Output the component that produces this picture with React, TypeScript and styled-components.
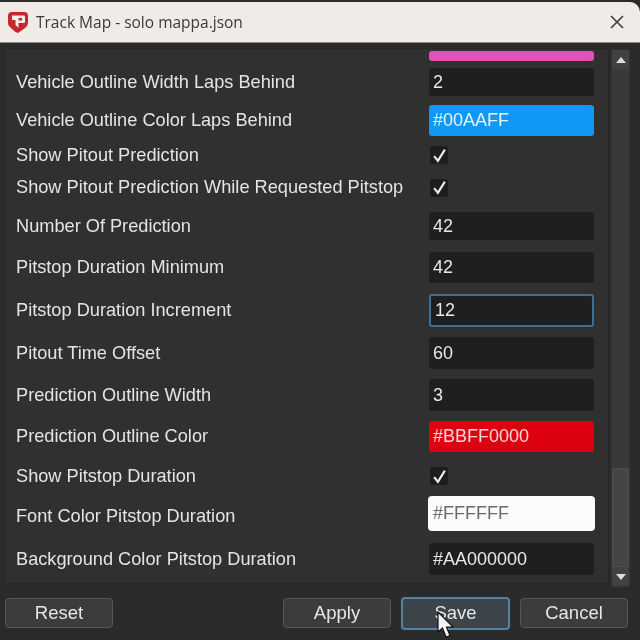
import { createGlobalStyle, styled } from 'styled-components';

const GlobalStyle = createGlobalStyle`
    html, body {
        margin: 0;
        padding: 0;
        background: #2c2c2c;
    }
    * {
        box-sizing: border-box;
    }
`;

const Window = styled.div`
    position: relative;
    width: 640px;
    height: 640px;
    overflow: hidden;
    display: flex;
    flex-direction: column;
    background: #2b2b2b;
    font-family: 'Liberation Sans', Arial, sans-serif;
    color: #e6e6e6;
    filter: blur(0.35px);
`;

const TitleBar = styled.div`
    height: 41px;
    margin-top: 2px;
    flex: none;
    display: flex;
    align-items: center;
    padding: 0 16px 0 7px;
    gap: 7px;
    background: #f1ebe7;
    border-top-right-radius: 10px;
    border-bottom: 1px solid #8d8a88;
`;

const Title = styled.div`
    flex: 1;
    font-family: 'Open Sans', 'Noto Sans', sans-serif;
    font-size: 15.5px;
    color: #3a3a3a;
`;

const Body = styled.div`
    flex: 1;
    min-height: 0;
    display: flex;
    padding: 5px 10px 0 4px;
    gap: 2px;
`;

const Panel = styled.div`
    flex: 1;
    min-width: 0;
    height: 536px;
    overflow: hidden;
    background: #303030;
    border: 1px solid #262626;
    border-radius: 3px;
    padding-left: 11px;
    display: flex;
    flex-direction: column;
`;

const Row = styled.div<{ $h: number }>`
    height: ${(p) => p.$h}px;
    flex: none;
    display: grid;
    grid-template-columns: 413px 165px;
    align-items: center;
`;

const Label = styled.div<{ $drop?: boolean }>`
    font-size: 18.2px;
    white-space: nowrap;
    color: #e4e4e4;
    margin-top: ${(p) => (p.$drop ? 5 : 0)}px;
`;

const Field = styled.div<{ $bg?: string; $fg?: string; $h?: number; $focus?: boolean; $bloom?: boolean }>`
    height: ${(p) => p.$h ?? 32}px;
    display: flex;
    align-items: center;
    padding-left: 4px;
    font-size: 18px;
    border-radius: 3px;
    background: ${(p) => p.$bg ?? '#1f1f1f'};
    color: ${(p) => p.$fg ?? '#e8e8e8'};
    border: ${(p) => (p.$focus ? '2px solid #3f6e8e' : 'none')};
    box-shadow: ${(p) => (p.$bloom ? '0 0 0 1px #fbfbfb' : 'none')};
`;

const Check = styled.div`
    width: 18px;
    height: 18px;
    margin-left: 1px;
    border-radius: 3px;
    background: #1d1d1d;
    display: flex;
    align-items: center;
    justify-content: center;
`;

const ScrollBar = styled.div`
    width: 19px;
    height: 538px;
    margin-top: 1px;
    flex: none;
    display: flex;
    flex-direction: column;
    background: #393939;
    border: 1px solid #343434;
    border-radius: 2px;
`;

const ScrollArrow = styled.div`
    height: 19px;
    flex: none;
    display: flex;
    align-items: center;
    justify-content: center;
    background: #414141;
`;

const ScrollTrack = styled.div`
    flex: 1;
    display: flex;
    flex-direction: column;
    justify-content: flex-end;
`;

const ScrollThumb = styled.div`
    height: 99px;
    background: #454545;
    border: 1px solid #4f4f4f;
    border-radius: 2px;
`;

const Footer = styled.div`
    height: 54px;
    flex: none;
    display: flex;
    align-items: center;
    padding: 0 12px 0 5px;
`;

const Btn = styled.div<{ $focus?: boolean; $push?: boolean }>`
    width: ${(p) => (p.$focus ? 109 : 108)}px;
    height: ${(p) => (p.$focus ? 33 : 30)}px;
    margin-left: ${(p) => (p.$push ? 'auto' : '10px')};
    display: flex;
    align-items: center;
    justify-content: center;
    font-size: 18.5px;
    color: #e6e6e6;
    border-radius: 4px;
    background: ${(p) => (p.$focus ? '#3d4449' : '#3c3c3c')};
    border: ${(p) => (p.$focus ? '2px solid #55839f' : '1px solid #565656')};

    &:first-child {
        margin-left: 0;
    }
`;

const Cursor = styled.svg`
    position: absolute;
    left: 437px;
    top: 611px;
`;

type RowData = {
    label?: string;
    h: number;
    value?: string;
    check?: boolean;
    bg?: string;
    fg?: string;
    fh?: number;
    focus?: boolean;
    bloom?: boolean;
    drop?: boolean;
};

const rows: RowData[] = [
    { h: 14, value: '', bg: '#e052b8', fh: 10 },
    { label: 'Vehicle Outline Width Laps Behind', h: 38, value: '2', fh: 28 },
    { label: 'Vehicle Outline Color Laps Behind', h: 39, value: '#00AAFF', bg: '#0f98f5', fg: '#e6f4ff', fh: 31 },
    { label: 'Show Pitout Prediction', h: 30, check: true },
    { label: 'Show Pitout Prediction While Requested Pitstop', h: 35, check: true },
    { label: 'Number Of Prediction', h: 42, value: '42', fh: 28 },
    { label: 'Pitstop Duration Minimum', h: 41, value: '42', fh: 31 },
    { label: 'Pitstop Duration Increment', h: 45, value: '12', fh: 33, focus: true },
    { label: 'Pitout Time Offset', h: 40, value: '60' },
    { label: 'Prediction Outline Width', h: 44, value: '3' },
    { label: 'Prediction Outline Color', h: 39, value: '#BBFF0000', bg: '#de0210', fg: '#f3d6d6', fh: 31 },
    { label: 'Show Pitstop Duration', h: 40, check: true },
    { label: 'Font Color Pitstop Duration', h: 35, value: '#FFFFFF', bg: '#fbfbfb', fg: '#6a6a6a', fh: 33, bloom: true, drop: true },
    { label: 'Background Color Pitstop Duration', h: 56, value: '#AA000000' },
];

const App = () => {
    return (
        <Window>
            <GlobalStyle />
            <TitleBar>
                <svg width="22" height="23" viewBox="0 0 22 23">
                    <path
                        d="M5 1 H17 Q21 1 21 5 V12 Q21 15 18 17 L11 22 Q9 22 6 19 L2 15 Q1 14 1 11 V5 Q1 1 5 1 Z"
                        fill="#c5272f"
                    />
                    <path
                        d="M5 4.5 H17 Q18 4.5 18 5.5 V11 Q18 12 17 12 H11.5 V17 L8.5 14 V9 H5 Z"
                        fill="#f6e9e6"
                    />
                    <rect x="11.5" y="7" width="3.5" height="2.5" fill="#c5272f" />
                </svg>
                <Title>Track Map - solo mappa.json</Title>
                <svg width="14" height="14" viewBox="0 0 14 14">
                    <path
                        d="M1 1 L13 13 M13 1 L1 13"
                        stroke="#3c3c3c"
                        strokeWidth="1.6"
                    />
                </svg>
            </TitleBar>
            <Body>
                <Panel>
                    {rows.map((r, i) => (
                        <Row key={i} $h={r.h}>
                            <Label $drop={r.drop}>{r.label}</Label>
                            {r.check ? (
                                <Check>
                                    <svg width="15" height="15" viewBox="0 0 14 14">
                                        <path
                                            d="M2 7.5 L5.5 12 L12 1.5"
                                            fill="none"
                                            stroke="#ececec"
                                            strokeWidth="2"
                                        />
                                    </svg>
                                </Check>
                            ) : (
                                <Field
                                    $bg={r.bg}
                                    $fg={r.fg}
                                    $h={r.fh}
                                    $focus={r.focus}
                                    $bloom={r.bloom}
                                >
                                    {r.value}
                                </Field>
                            )}
                        </Row>
                    ))}
                </Panel>
                <ScrollBar>
                    <ScrollArrow>
                        <svg width="10" height="6" viewBox="0 0 12 7">
                            <path d="M6 0 L12 7 H0 Z" fill="#dcdcdc" />
                        </svg>
                    </ScrollArrow>
                    <ScrollTrack>
                        <ScrollThumb />
                    </ScrollTrack>
                    <ScrollArrow>
                        <svg width="10" height="6" viewBox="0 0 12 7">
                            <path d="M0 0 H12 L6 7 Z" fill="#dcdcdc" />
                        </svg>
                    </ScrollArrow>
                </ScrollBar>
            </Body>
            <Footer>
                <Btn>Reset</Btn>
                <Btn $push>Apply</Btn>
                <Btn $focus>Save</Btn>
                <Btn>Cancel</Btn>
            </Footer>
            <Cursor width="18" height="28" viewBox="0 0 18 28">
                <path
                    d="M1 1 V21 L5.5 17 L9 26 L13 24.5 L9.5 16 L16 16 Z"
                    fill="#f6f6f6"
                    stroke="#111111"
                    strokeWidth="1.2"
                />
            </Cursor>
        </Window>
    );
};

export default App;
